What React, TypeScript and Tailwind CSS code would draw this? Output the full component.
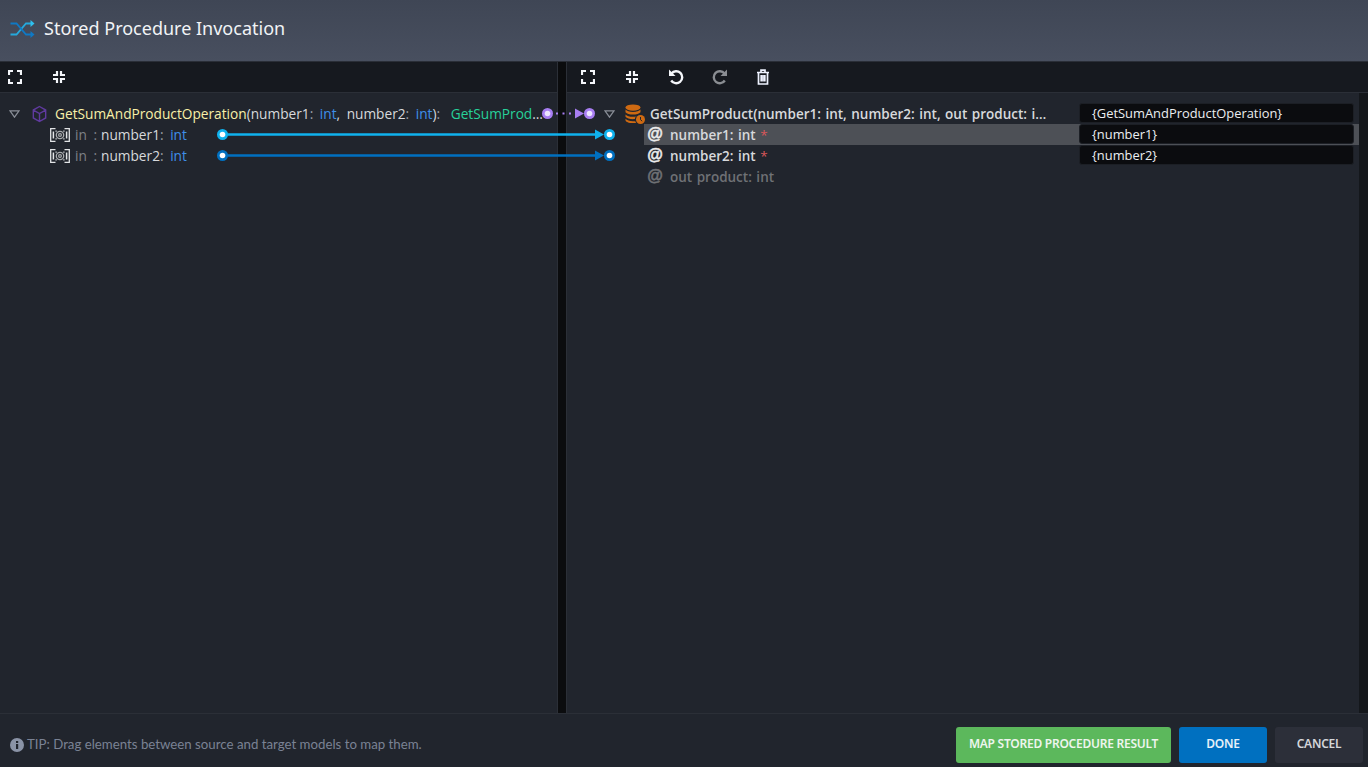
import React from "react";

const Row = ({ className = "", children }: { className?: string; children: React.ReactNode }) => (
  <div className={`flex h-[21px] items-center whitespace-nowrap ${className}`}>{children}</div>
);

const Expand = () => (
  <svg width="14" height="14" viewBox="0 0 14 14" fill="none" stroke="#f4f6fa" strokeWidth="2.2">
    <path d="M1 5V1h4M9 1h4v4M13 9v4H9M5 13H1V9" />
  </svg>
);
const Collapse = () => (
  <svg width="14" height="14" viewBox="0 0 14 14" fill="none" stroke="#f4f6fa" strokeWidth="2.2">
    <path d="M1 5h4V1M9 1v4h4M13 9H9v4M5 13V9H1" />
  </svg>
);
const Tri = () => (
  <svg width="11" height="8" viewBox="0 0 11 8" fill="none" stroke="#8a8f98" strokeWidth="1.2">
    <path d="M1 .8h9L5.5 7.2z" />
  </svg>
);
const Param = () => (
  <svg width="20" height="14" viewBox="0 0 20 14" fill="none" stroke="#e2e4e6" strokeWidth="1.3">
    <path d="M5.5 .7H.7v12.6h4.8M14.5 .7h4.8v12.6h-4.8" />
    <path d="M3.4 3.4v7.2M16.6 3.4v7.2" strokeWidth="1.5" />
    <path d="M5.5 3.2h1.2M5.5 10.8h1.2M13.3 3.2h1.2M13.3 10.8h1.2" strokeWidth="1.2" />
    <circle cx="10" cy="7" r="3.7" strokeWidth="1.3" stroke="#a9abae" />
    <circle cx="10" cy="7" r="1.4" strokeWidth="1.2" stroke="#a9abae" />
  </svg>
);
const At = ({ dim = false }: { dim?: boolean }) => (
  <span className={`mb-[2px] w-[16px] text-center text-[16px] font-bold leading-none [-webkit-text-stroke:0.5px_currentColor] [font-family:'Liberation_Sans',sans-serif] ${dim ? "text-[#6f7175]" : "text-[#ececec]"}`}>@</span>
);

export default function App() {
  const mono = "[font-family:'Open_Sans',sans-serif]";
  return (
    <div className="relative flex h-[767px] w-[1368px] flex-col overflow-hidden bg-[#21252d] [font-family:'Noto_Sans',sans-serif]">
      <header className="flex h-[62px] items-center border-b border-[#2a2e37] bg-gradient-to-b from-[#3f4655] to-[#484f5f] pb-[4px] pl-[10px]">
        <svg width="25" height="20" viewBox="0 0 25 20" fill="none" strokeWidth="1.8">
          <path d="M0.5 15.5h6L16 4.5h7" stroke="#25a9dc" />
          <path d="M0.5 4.5h6l9.5 11h7" stroke="#0f79c4" />
          <path d="M20.5 1l4 3.5-4 3.5z" fill="#2fc0ee" stroke="none" />
          <path d="M20.5 12l4 3.5-4 3.5z" fill="#0f79c4" stroke="none" />
        </svg>
        <span className="ml-[9px] text-[18px] text-[#f1f3f6]">Stored Procedure Invocation</span>
      </header>

      <div className="flex min-h-0 flex-1">
        <section className="flex w-[557px] flex-col">
          <div className="flex h-[31px] items-center gap-[30px] border-b border-[#2b2f37] bg-[#16191f] pb-[1px] pl-[8px]">
            <Expand />
            <Collapse />
          </div>
          <div className={`pl-[9px] pt-[10px] text-[13.7px] text-[#d7d9dc] [word-spacing:3px] ${mono}`}>
            <Row>
              <Tri />
              <svg className="ml-[12px]" width="15" height="18" viewBox="0 0 17 19" fill="none" stroke="#5f3a9e" strokeWidth="1.6">
                <path d="M8.5 1l7 4v9l-7 4-7-4V5zM1.5 5l7 4 7-4M8.5 9v9" />
              </svg>
              <span className="ml-[8px] mt-[2px] w-[489px] truncate">
                <span className="text-[#f8f0a8]">GetSumAndProductOperation</span>(number1<span className="text-[#9a9da3]">:</span> <span className="text-[#3f8fe8]">int</span>, number2<span className="text-[#9a9da3]">:</span> <span className="text-[#3f8fe8]">int</span>)<span className="mr-[4px] text-[#9a9da3]">:</span> <span className="text-[#27d19a]">GetSumProductResult</span>
              </span>
            </Row>
            <Row className="pl-[41px]">
              <Param />
              <span className="ml-[5px] mt-[2px] text-[#7e8187]">in :</span>
              <span className="ml-[4px] mt-[2px]">number1<span className="text-[#9a9da3]">:</span> <span className="text-[#3f8fe8]">int</span></span>
            </Row>
            <Row className="pl-[41px]">
              <Param />
              <span className="ml-[5px] mt-[2px] text-[#7e8187]">in :</span>
              <span className="ml-[4px] mt-[2px]">number2<span className="text-[#9a9da3]">:</span> <span className="text-[#3f8fe8]">int</span></span>
            </Row>
          </div>
        </section>

        <div className="w-[10px] border-x border-[#2b2f37] bg-[#0b0c0e]" />

        <section className="flex min-w-0 flex-1 flex-col">
          <div className="flex h-[31px] items-center border-b border-[#2b2f37] bg-[#16191f] pb-[1px] pl-[14px]">
            <Expand />
            <span className="ml-[30px]"><Collapse /></span>
            <svg className="ml-[29px]" width="16" height="16" viewBox="0 0 16 16" fill="none" stroke="#f4f6fa" strokeWidth="2.4">
              <path d="M3.5 4.5A6 6 0 1 1 3.2 11.5" />
              <path d="M1 .5v6.5h6.5" fill="#f4f6fa" stroke="none" />
            </svg>
            <svg className="ml-[28px]" width="16" height="16" viewBox="0 0 16 16" fill="none" stroke="#8a8d92" strokeWidth="2.4">
              <path d="M12.5 4.5A6 6 0 1 0 12.8 11.5" />
              <path d="M15 .5v6.5H8.5" fill="#8a8d92" stroke="none" />
            </svg>
            <svg className="ml-[28px]" width="14" height="16" viewBox="0 0 14 16" fill="none" stroke="#eef2ff" strokeWidth="1.7">
              <path d="M1 3.5h12M5 3.5V1.2h4v2.3M2.5 3.5V15h9V3.5M5.2 6v6.5M7 6v6.5M8.8 6v6.5" />
            </svg>
          </div>
          <div className={`flex flex-1 border-r-[9px] border-[#14171b] pt-[10px] text-[13.5px] font-semibold text-[#d7d9dc] ${mono}`}>
            <div className="flex w-[512px] shrink-0 flex-col [word-spacing:1px]">
              <Row className="pl-[37px]">
                <Tri />
                <svg className="ml-[10px]" width="20" height="20" viewBox="0 0 20 20">
                  <g fill="#cf6a12">
                    <ellipse cx="8" cy="3.6" rx="7.5" ry="3.2" />
                    <path d="M.5 5.6c1.4 1.7 4 2.4 7.5 2.4s6.1-.7 7.5-2.4v2.6c-1.4 1.7-4 2.4-7.5 2.4S1.9 9.9.5 8.2z" />
                    <path d="M.5 10.4c1.4 1.7 4 2.4 7.5 2.4 1 0 2-.1 2.9-.2-.6.8-1 1.7-1 2.5-.6.1-1.2.1-1.9.1-3.5 0-6.1-.7-7.5-2.4z" />
                    <path d="M.5 14.8c1.4 1.7 4 2.4 7.5 2.4h2.3c.2.6.5 1.2 1 1.7-1 .1-2.1.2-3.3.2-4.2 0-7.5-1.3-7.5-2.9z" />
                  </g>
                  <circle cx="15.5" cy="15.5" r="4.5" fill="#cf6a12" />
                  <path d="M15.5 13v2.7l1.7 1.5" stroke="#21252d" strokeWidth="1" fill="none" />
                </svg>
                <span className="ml-[5px] mt-[2px] w-[402px] truncate">GetSumProduct(number1: int, number2: int, out product: int)</span>
              </Row>
              <Row className="ml-[77px] bg-[#4d5056] pl-[3px]">
                <At />
                <span className="ml-[7px] mt-[2px]">number1: int <span className="font-normal text-[#d9575a]">*</span></span>
              </Row>
              <Row className="ml-[77px] pl-[3px]">
                <At />
                <span className="ml-[7px] mt-[2px]">number2: int <span className="font-normal text-[#d9575a]">*</span></span>
              </Row>
              <Row className="ml-[77px] pl-[3px] text-[#6f7175]">
                <At dim />
                <span className="ml-[7px] mt-[2px]">out product: int</span>
              </Row>
            </div>
            <div className="flex w-[280px] shrink-0 flex-col">
              {["{GetSumAndProductOperation}", "{number1}", "{number2}"].map((t, i) => (
                <div key={t} className={`h-[21px] ${i === 1 ? "bg-[#4d5056]" : ""}`}>
                  <div className="flex h-[20px] w-[275px] items-center rounded-[3px] border border-[#1c1f25] bg-[#0b0c0f] pl-[12px] pt-[2px] text-[12.9px] font-normal text-[#eceef1]">
                    {t}
                  </div>
                </div>
              ))}
            </div>
          </div>
        </section>
      </div>

      <footer className="flex h-[54px] items-start border-t border-[#2b2f37] bg-[#21252d] pl-[10px] pt-[13px]">
        <div className="flex h-[36px] items-center text-[13.25px] text-[#7a8294] [font-family:'Lato',sans-serif]">
          <svg width="14" height="14" viewBox="0 0 14 14">
            <circle cx="7" cy="7" r="7" fill="#8a93a6" />
            <rect x="6" y="6" width="2.2" height="5" fill="#21252d" />
            <rect x="6" y="3" width="2.2" height="2" fill="#21252d" />
          </svg>
          <span className="ml-[3px]">TIP: Drag elements between source and target models to map them.</span>
        </div>
        <div className="ml-auto flex gap-[8px] pr-[5px] text-[12px] font-semibold tracking-[-0.25px]">
          <button className="h-[36px] w-[215px] rounded-[3px] bg-[#5cb85c] pb-[2px] text-[#eef5ee]">MAP STORED PROCEDURE RESULT</button>
          <button className="h-[36px] w-[88px] rounded-[3px] bg-[#0070c0] pb-[2px] text-[#e6f0f8]">DONE</button>
          <button className="h-[36px] w-[88px] rounded-[3px] bg-[#2c2f39] pb-[2px] text-[#d4d6da]">CANCEL</button>
        </div>
      </footer>

      {/* connectors lying over the panels */}
      <svg className="pointer-events-none absolute left-0 top-0" width="1368" height="767">
        <g stroke="#a87ef2" fill="#a87ef2">
          <path d="M556 113.5h15" strokeWidth="2" strokeDasharray="2 4.5" fill="none" />
          <path d="M575 108.5l9 5-9 5z" stroke="none" />
          <circle cx="547.5" cy="113.5" r="5.5" stroke="none" />
          <circle cx="589.5" cy="113.5" r="5.5" stroke="none" />
          <circle cx="547.5" cy="113.5" r="2.8" fill="#ece4ff" stroke="none" />
          <circle cx="589.5" cy="113.5" r="2.8" fill="#ece4ff" stroke="none" />
        </g>
        <g>
          <path d="M222 134.5h373" stroke="#0fb2ee" strokeWidth="2.5" />
          <path d="M595 129.5l9 5-9 5z" fill="#0fb2ee" />
          <circle cx="222.5" cy="134.5" r="5.5" fill="#0fb2ee" />
          <circle cx="609.5" cy="134.5" r="5.5" fill="#0fb2ee" />
          <circle cx="222.5" cy="134.5" r="2.8" fill="#fff" />
          <circle cx="609.5" cy="134.5" r="2.8" fill="#fff" />
        </g>
        <g>
          <path d="M222 155.5h373" stroke="#0070c0" strokeWidth="2.5" />
          <path d="M595 150.5l9 5-9 5z" fill="#0070c0" />
          <circle cx="222.5" cy="155.5" r="5.5" fill="#0070c0" />
          <circle cx="609.5" cy="155.5" r="5.5" fill="#0070c0" />
          <circle cx="222.5" cy="155.5" r="2.8" fill="#fff" />
          <circle cx="609.5" cy="155.5" r="2.8" fill="#fff" />
        </g>
      </svg>
    </div>
  );
}
